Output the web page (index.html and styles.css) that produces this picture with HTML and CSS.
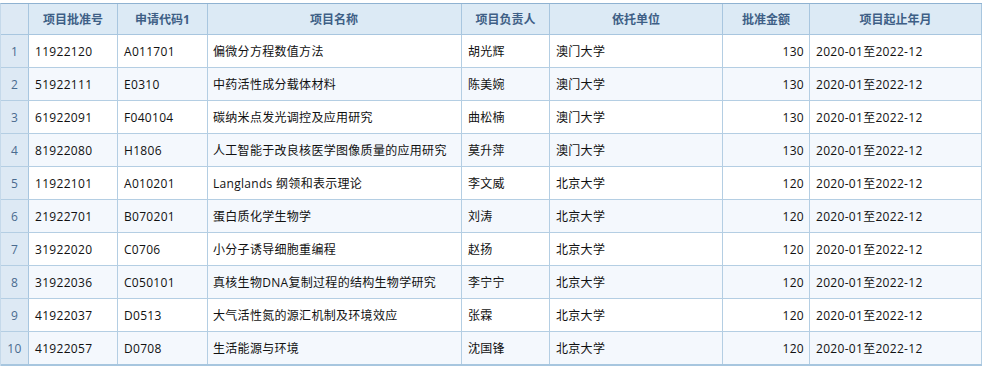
FILE: index.html
```html
<!DOCTYPE html>
<html lang="zh-CN">
<head>
<meta charset="utf-8">
<title>项目列表</title>
<link rel="stylesheet" href="styles.css">
</head>
<body>
<div class="grid">
  <div class="row head">
    <div class="c num"></div>
    <div class="c">项目批准号</div>
    <div class="c">申请代码1</div>
    <div class="c">项目名称</div>
    <div class="c">项目负责人</div>
    <div class="c">依托单位</div>
    <div class="c">批准金额</div>
    <div class="c">项目起止年月</div>
  </div>
  <div class="row">
    <div class="c num">1</div><div class="c">11922120</div><div class="c">A011701</div><div class="c">偏微分方程数值方法</div><div class="c">胡光辉</div><div class="c">澳门大学</div><div class="c r">130</div><div class="c">2020-01至2022-12</div>
  </div>
  <div class="row alt">
    <div class="c num">2</div><div class="c">51922111</div><div class="c">E0310</div><div class="c">中药活性成分载体材料</div><div class="c">陈美婉</div><div class="c">澳门大学</div><div class="c r">130</div><div class="c">2020-01至2022-12</div>
  </div>
  <div class="row">
    <div class="c num">3</div><div class="c">61922091</div><div class="c">F040104</div><div class="c">碳纳米点发光调控及应用研究</div><div class="c">曲松楠</div><div class="c">澳门大学</div><div class="c r">130</div><div class="c">2020-01至2022-12</div>
  </div>
  <div class="row alt">
    <div class="c num">4</div><div class="c">81922080</div><div class="c">H1806</div><div class="c">人工智能于改良核医学图像质量的应用研究</div><div class="c">莫升萍</div><div class="c">澳门大学</div><div class="c r">130</div><div class="c">2020-01至2022-12</div>
  </div>
  <div class="row">
    <div class="c num">5</div><div class="c">11922101</div><div class="c">A010201</div><div class="c">Langlands 纲领和表示理论</div><div class="c">李文威</div><div class="c">北京大学</div><div class="c r">120</div><div class="c">2020-01至2022-12</div>
  </div>
  <div class="row alt">
    <div class="c num">6</div><div class="c">21922701</div><div class="c">B070201</div><div class="c">蛋白质化学生物学</div><div class="c">刘涛</div><div class="c">北京大学</div><div class="c r">120</div><div class="c">2020-01至2022-12</div>
  </div>
  <div class="row">
    <div class="c num">7</div><div class="c">31922020</div><div class="c">C0706</div><div class="c">小分子诱导细胞重编程</div><div class="c">赵扬</div><div class="c">北京大学</div><div class="c r">120</div><div class="c">2020-01至2022-12</div>
  </div>
  <div class="row alt">
    <div class="c num">8</div><div class="c">31922036</div><div class="c">C050101</div><div class="c">真核生物DNA复制过程的结构生物学研究</div><div class="c">李宁宁</div><div class="c">北京大学</div><div class="c r">120</div><div class="c">2020-01至2022-12</div>
  </div>
  <div class="row">
    <div class="c num">9</div><div class="c">41922037</div><div class="c">D0513</div><div class="c">大气活性氮的源汇机制及环境效应</div><div class="c">张霖</div><div class="c">北京大学</div><div class="c r">120</div><div class="c">2020-01至2022-12</div>
  </div>
  <div class="row alt last">
    <div class="c num">10</div><div class="c">41922057</div><div class="c">D0708</div><div class="c">生活能源与环境</div><div class="c">沈国锋</div><div class="c">北京大学</div><div class="c r">120</div><div class="c">2020-01至2022-12</div>
  </div>
</div>
</body>
</html>
```

FILE: styles.css
```css
html, body {
  margin: 0;
  padding: 0;
  background: #ffffff;
}
body {
  font-family: "Open Sans", "Noto Sans CJK SC", sans-serif;
  font-size: 12px;
  letter-spacing: 0.3px;
  color: #111111;
  padding-top: 3px;
}
.grid {
  width: 982px;
  border-top: 1px solid #8fb2d1;
  border-left: 1px solid #c5d9ea;
  box-sizing: border-box;
}
.row {
  display: grid;
  grid-template-columns: 28px 89px 90px 254px 88px 173px 87px 172px;
  height: 33px;
  border-bottom: 1px solid #b4cee3;
  box-sizing: border-box;
  background: #ffffff;
}
.row.alt {
  background: #f4f8fd;
}
.row.last {
  border-bottom: 2px solid #a7c6df;
  height: 34px;
}
.row.head {
  height: 31px;
  background: #dceaf5;
  border-bottom: 1px solid #a8c6df;
}
.c {
  display: flex;
  align-items: center;
  padding: 0 6px;
  border-right: 1px solid #b4cee3;
  box-sizing: border-box;
  white-space: nowrap;
  overflow: hidden;
}
.row .c:nth-child(4) {
  padding-left: 5px;
}
.head .c {
  justify-content: center;
  font-weight: bold;
  letter-spacing: 0;
  color: #3e5f86;
  border-right-color: #a8c6df;
}
.c.r {
  justify-content: flex-end;
  padding-right: 5px;
}
.c.num {
  justify-content: center;
  padding: 0;
  background: #dde9f4;
  color: #4a6b8f;
  border-right-color: #a8c6df;
}
```
